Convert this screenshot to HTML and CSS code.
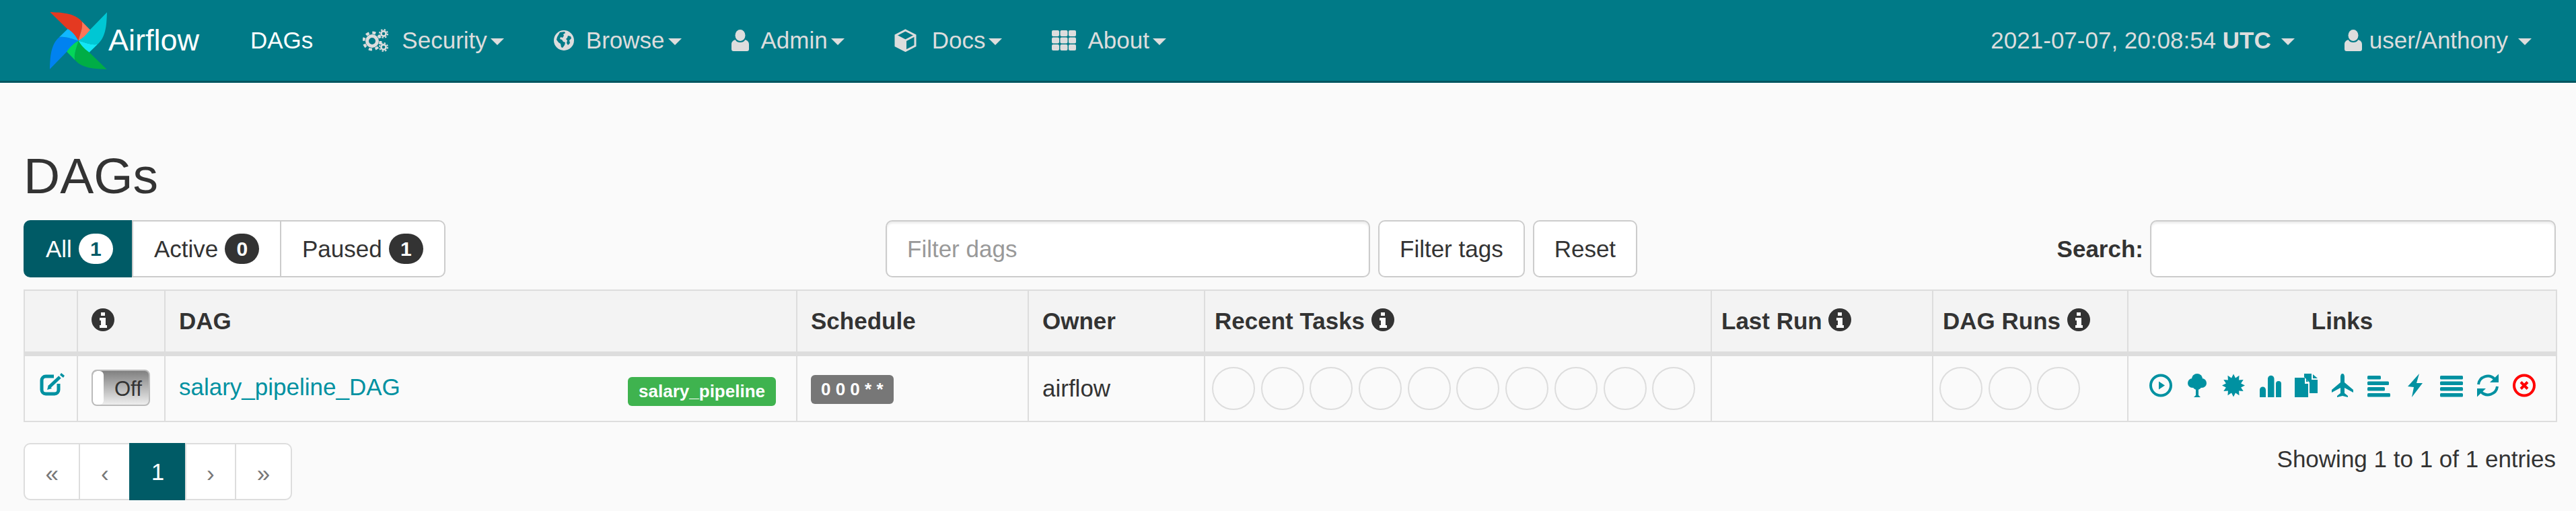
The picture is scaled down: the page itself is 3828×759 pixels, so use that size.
FILE: index.html
```html
<!DOCTYPE html>
<html lang="en">
<head>
    <meta charset="UTF-8">
    <title>DAGs - Airflow</title>
    <link rel="stylesheet" href="styles.css">
</head>
<body>
    <nav class="navbar">
        <a class="brand">
            <svg class="logo" viewBox="102 48 254 256">
                <g>
                    <path fill="#e43921" d="M102 48C150 50 210 50 245 90C250 120 235 150 229 176C215 150 195 135 178 122Z"/>
                    <path fill="#ff7557" d="M245 90L282 128C270 150 250 165 229 176C235 150 250 120 245 90Z"/>
                </g>
                <g transform="rotate(90 229 176)">
                    <path fill="#00c7d4" d="M102 48C150 50 210 50 245 90C250 120 235 150 229 176C215 150 195 135 178 122Z"/>
                    <path fill="#11e7f5" d="M245 90L282 128C270 150 250 165 229 176C235 150 250 120 245 90Z"/>
                </g>
                <g transform="rotate(180 229 176)">
                    <path fill="#00ad46" d="M102 48C150 50 210 50 245 90C250 120 235 150 229 176C215 150 195 135 178 122Z"/>
                    <path fill="#04d659" d="M245 90L282 128C270 150 250 165 229 176C235 150 250 120 245 90Z"/>
                </g>
                <g transform="rotate(270 229 176)">
                    <path fill="#0082f0" d="M102 48C150 50 210 50 245 90C250 120 235 150 229 176C215 150 195 135 178 122Z"/>
                    <path fill="#11b7ff" d="M245 90L282 128C270 150 250 165 229 176C235 150 250 120 245 90Z"/>
                </g>
            </svg>
            <span>Airflow</span>
        </a>
        <ul class="nav-items">
            <li class="nav-link nav-link-current"><span>DAGs</span></li>
            <li class="nav-link">
                <svg class="nav-icon icon-cogs" viewBox="0 0 38 34">
                    <circle cx="14" cy="18" r="7.500" fill="none" stroke="#ddd" stroke-width="5"/>
                    <circle cx="14" cy="18" r="12.500" fill="none" stroke="#ddd" stroke-width="4" stroke-dasharray="5 4.800"/>
                    <circle cx="31" cy="7" r="3.600" fill="none" stroke="#ddd" stroke-width="2.600"/>
                    <circle cx="31" cy="7" r="6" fill="none" stroke="#ddd" stroke-width="2" stroke-dasharray="2.400 2.300"/>
                    <circle cx="31" cy="27" r="3.600" fill="none" stroke="#ddd" stroke-width="2.600"/>
                    <circle cx="31" cy="27" r="6" fill="none" stroke="#ddd" stroke-width="2" stroke-dasharray="2.400 2.300"/>
                </svg>
                <span>Security</span><span class="caret"></span>
            </li>
            <li class="nav-link">
                <svg class="nav-icon icon-globe" viewBox="0 0 30 30">
                    <circle cx="15" cy="15" r="15" fill="#ddd"/>
                    <path fill="#007a87" d="M9 3l7-1 1 2-3 2 1 2-2 3-3-1-1 3 3 1 2 3 3 1-1 4-3 4-2-1-1-5-3-2-3-4 1-4z"/>
                    <path fill="#007a87" d="M21 8l4 1 1 3-3 3 1 4-3 3-2-3 1-4-2-2 2-2z"/>
                </svg>
                <span>Browse</span><span class="caret"></span>
            </li>
            <li class="nav-link">
                <svg class="nav-icon icon-user" viewBox="0 0 26 32">
                    <ellipse cx="13" cy="8.500" rx="7.500" ry="8.500" fill="#ddd"/>
                    <path fill="#ddd" d="M5.500 15c2 3 4.500 4 7.500 4s5.500-1 7.500-4c3 1 5.500 3 5.500 7v7c0 2-1 3-3 3H3c-2 0-3-1-3-3v-7c0-4 2.500-6 5.500-7z"/>
                </svg>
                <span>Admin</span><span class="caret"></span>
            </li>
            <li class="nav-link">
                <svg class="nav-icon icon-cube" viewBox="0 0 33 34">
                    <path fill="none" stroke="#ddd" stroke-width="3" d="M16.500 2L31 9.500V25L16.500 32.500L2 25V9.500ZM2 9.500L16.500 17L31 9.500M16.500 17V32.500"/>
                    <path fill="#ddd" d="M2 9.500L16.500 17V32.500L2 25Z"/>
                </svg>
                <span>Docs</span><span class="caret"></span>
            </li>
            <li class="nav-link">
                <svg class="nav-icon icon-th" viewBox="0 0 36 30">
                    <g fill="#ddd">
                        <rect width="11" height="9" rx="2"/><rect x="12.500" width="11" height="9" rx="2"/><rect x="25" width="11" height="9" rx="2"/>
                        <rect y="10.500" width="11" height="9" rx="2"/><rect x="12.500" y="10.500" width="11" height="9" rx="2"/><rect x="25" y="10.500" width="11" height="9" rx="2"/>
                        <rect y="21" width="11" height="9" rx="2"/><rect x="12.500" y="21" width="11" height="9" rx="2"/><rect x="25" y="21" width="11" height="9" rx="2"/>
                    </g>
                </svg>
                <span>About</span><span class="caret"></span>
            </li>
        </ul>
        <ul class="nav-items nav-right">
            <li class="nav-link"><span>2021-07-07, 20:08:54 <strong>UTC</strong></span><span class="caret caret-spaced"></span></li>
            <li class="nav-link">
                <svg class="nav-icon icon-user icon-user-small" viewBox="0 0 26 32">
                    <ellipse cx="13" cy="8.500" rx="7.500" ry="8.500" fill="#ddd"/>
                    <path fill="#ddd" d="M5.500 15c2 3 4.500 4 7.500 4s5.500-1 7.500-4c3 1 5.500 3 5.500 7v7c0 2-1 3-3 3H3c-2 0-3-1-3-3v-7c0-4 2.500-6 5.500-7z"/>
                </svg>
                <span>user/Anthony</span><span class="caret caret-spaced"></span>
            </li>
        </ul>
    </nav>

    <main class="container">
        <h2 class="page-title">DAGs</h2>

        <div class="toolbar">
            <div class="btn-group">
                <a class="btn btn-active"><span>All</span><span class="badge badge-light">1</span></a>
                <a class="btn btn-mid"><span>Active</span><span class="badge">0</span></a>
                <a class="btn"><span>Paused</span><span class="badge">1</span></a>
            </div>
            <form class="filters">
                <input class="form-control filter-input" type="text" placeholder="Filter dags">
                <button class="btn btn-single" type="button">Filter tags</button>
                <button class="btn btn-single" type="button">Reset</button>
            </form>
            <label class="search">
                <strong>Search:</strong>
                <input class="form-control search-input" type="search">
            </label>
        </div>

        <table class="dags-table">
            <colgroup>
                <col class="col-edit"><col class="col-toggle"><col class="col-dag"><col class="col-schedule"><col class="col-owner">
                <col class="col-tasks"><col class="col-last"><col class="col-runs"><col class="col-links">
            </colgroup>
            <thead>
                <tr>
                    <th></th>
                    <th><svg class="info" viewBox="0 0 34 34"><circle cx="17" cy="17" r="17" fill="#333"/><path fill="#fafafa" d="M14 6h6v5h-6zM12 14h9v11h2v4H12v-4h2v-7h-2z"/></svg></th>
                    <th>DAG</th>
                    <th>Schedule</th>
                    <th>Owner</th>
                    <th class="th-tight">Recent Tasks <svg class="info" viewBox="0 0 34 34"><circle cx="17" cy="17" r="17" fill="#333"/><path fill="#fafafa" d="M14 6h6v5h-6zM12 14h9v11h2v4H12v-4h2v-7h-2z"/></svg></th>
                    <th class="th-tight">Last Run <svg class="info" viewBox="0 0 34 34"><circle cx="17" cy="17" r="17" fill="#333"/><path fill="#fafafa" d="M14 6h6v5h-6zM12 14h9v11h2v4H12v-4h2v-7h-2z"/></svg></th>
                    <th class="th-tight">DAG Runs <svg class="info" viewBox="0 0 34 34"><circle cx="17" cy="17" r="17" fill="#333"/><path fill="#fafafa" d="M14 6h6v5h-6zM12 14h9v11h2v4H12v-4h2v-7h-2z"/></svg></th>
                    <th class="th-center">Links</th>
                </tr>
            </thead>
            <tbody>
                <tr>
                    <td class="td-center">
                        <svg class="edit-icon" viewBox="0 0 37 34">
                            <path fill="none" stroke="#0091a1" stroke-width="5" d="M21 5H9a6 6 0 0 0-6 6v14a6 6 0 0 0 6 6h13a6 6 0 0 0 6-6V16"/>
                            <path fill="none" stroke="#0091a1" stroke-width="5" d="M14 21L30 6"/>
                            <path fill="#0091a1" d="M13 18l-2 7 7-2zM32 0l5 4-2 3-5-4z"/>
                        </svg>
                    </td>
                    <td>
                        <div class="toggle"><span class="toggle-thumb"></span><span class="toggle-text">Off</span></div>
                    </td>
                    <td>
                        <div class="dag-cell">
                            <a class="dag-link">salary_pipeline_DAG</a>
                            <span class="label label-tag">salary_pipeline</span>
                        </div>
                    </td>
                    <td><span class="label label-schedule">0 0 0 * *</span></td>
                    <td class="owner">airflow</td>
                    <td class="circles-cell">
                        <div class="circles">
                            <span class="circle"></span><span class="circle"></span><span class="circle"></span><span class="circle"></span><span class="circle"></span>
                            <span class="circle"></span><span class="circle"></span><span class="circle"></span><span class="circle"></span><span class="circle"></span>
                        </div>
                    </td>
                    <td></td>
                    <td class="circles-cell runs-cell">
                        <div class="circles">
                            <span class="circle"></span><span class="circle"></span><span class="circle"></span>
                        </div>
                    </td>
                    <td>
                        <div class="links">
                            <svg viewBox="0 0 34 35"><circle cx="17" cy="17.500" r="15" fill="none" stroke="#0091a1" stroke-width="4"/><path fill="#0091a1" d="M14 11.500L23 17.500L14 23.500Z"/></svg>
                            <svg viewBox="0 0 34 35"><g fill="#0091a1"><circle cx="17" cy="8" r="8"/><circle cx="10" cy="14" r="7"/><circle cx="24" cy="14" r="7"/><circle cx="17" cy="17" r="7"/><path d="M15 20h4v12l3 3h-10l3-3z"/></g></svg>
                            <svg viewBox="0 0 34 35"><path fill="#0091a1" d="M17 .5L20 6.400L25.500 2.800L25.100 9.400L31.700 9L28.100 14.500L34 17.500L28.100 20.500L31.700 26L25.100 25.600L25.500 32.200L20 28.600L17 34.500L14 28.600L8.500 32.200L8.900 25.600L2.300 26L5.900 20.500L0 17.500L5.900 14.500L2.300 9L8.900 9.400L8.500 2.800L14 6.400Z"/></svg>
                            <svg viewBox="0 0 34 35"><g fill="#0091a1"><path d="M2 35V24a4.500 4.500 0 0 1 9 0V35z"/><path d="M14 35V7.500a4.700 4.700 0 0 1 9.500 0V35z"/><path d="M26 35V15a4 4 0 0 1 8 0V35z"/></g></svg>
                            <svg viewBox="0 0 34 35"><g fill="#0091a1"><path d="M14 0h11v9h9v20H22V13L14 5z"/><path d="M27 1l7 6h-7z"/><path d="M0 6h15v9h5v20H0z"/><path d="M17 7l3 5h-3z"/></g></svg>
                            <svg viewBox="0 0 34 35"><path fill="#0091a1" d="M17 0c2 0 3 2 3 5v8l13 11v4L20 21v8l5 4v2l-8-2-8 2v-2l5-4v-8L1 28v-4l13-11V5c0-3 1-5 3-5z"/></svg>
                            <svg viewBox="0 0 34 35"><g fill="#0091a1"><rect y="3" width="20" height="5.500" rx="1.500"/><rect y="11.500" width="32" height="5.500" rx="1.500"/><rect y="20" width="26" height="5.500" rx="1.500"/><rect y="29" width="34" height="5.500" rx="1.500"/></g></svg>
                            <svg viewBox="0 0 34 35"><path fill="#0091a1" d="M23 0L6 19l9 1-3 15 16-21h-9z"/></svg>
                            <svg viewBox="0 0 34 35"><g fill="#0091a1"><rect y="3" width="34" height="5.500" rx="1.500"/><rect y="11.500" width="34" height="5.500" rx="1.500"/><rect y="20" width="34" height="5.500" rx="1.500"/><rect y="29" width="34" height="5.500" rx="1.500"/></g></svg>
                            <svg viewBox="0 0 34 35"><g fill="none" stroke="#0091a1" stroke-width="4"><path d="M3 16A14 14 0 0 1 27 8"/><path d="M31 19A14 14 0 0 1 7 27"/></g><g fill="#0091a1"><path d="M33 .5V13H20z"/><path d="M1 34.500V22h13z"/></g></svg>
                            <svg viewBox="0 0 34 35"><circle cx="17" cy="17.500" r="15" fill="none" stroke="#f00" stroke-width="4"/><path fill="none" stroke="#f00" stroke-width="4" d="M12 12.500L22 22.500M22 12.500L12 22.500"/></svg>
                        </div>
                    </td>
                </tr>
            </tbody>
        </table>

        <div class="table-footer">
            <ul class="pagination">
                <li>&laquo;</li>
                <li>&lsaquo;</li>
                <li class="page-active">1</li>
                <li>&rsaquo;</li>
                <li>&raquo;</li>
            </ul>
            <div class="entries">Showing 1 to 1 of 1 entries</div>
        </div>
    </main>
</body>
</html>
```
FILE: styles.css
```css
* {
    box-sizing: border-box;
}

body {
    margin: 0;
    background-color: #fafafa;
    color: #333;
    font-family: 'Liberation Sans', Arial, sans-serif;
    font-size: 35px;
}

.navbar {
    display: flex;
    align-items: center;
    height: 123px;
    padding-left: 74px;
    padding-right: 29px;
    background-color: #007a87;
    border-bottom: 3px solid #005560;
}

.brand {
    display: flex;
    align-items: center;
    width: 261px;
    color: #fff;
    font-size: 45px;
}

.logo {
    width: 85px;
    height: 85px;
    margin-right: 2px;
}

.nav-items {
    display: flex;
    align-items: center;
    margin: 0;
    padding: 0;
    list-style: none;
}

.nav-right {
    margin-left: auto;
}

.nav-link {
    display: flex;
    align-items: center;
    padding: 0 37px;
    color: #ddd;
    white-space: nowrap;
}

.nav-link-current {
    color: #fff;
}

.nav-icon {
    margin-right: 18px;
}

.icon-cogs {
    width: 38px;
    height: 34px;
    margin-right: 20px;
}

.icon-globe {
    width: 30px;
    height: 30px;
}

.icon-user {
    width: 26px;
    height: 32px;
}

.icon-user-small {
    margin-right: 11px;
}

.icon-cube {
    width: 33px;
    height: 34px;
    margin-right: 23px;
}

.icon-th {
    width: 36px;
    height: 30px;
    margin-right: 17px;
}

.caret {
    width: 0;
    height: 0;
    margin-left: 5px;
    margin-top: 3px;
    border-top: 10px solid #ddd;
    border-left: 10px solid transparent;
    border-right: 10px solid transparent;
}

.caret-spaced {
    margin-left: 15px;
}

.container {
    padding: 97px 30px 0 35px;
}

.page-title {
    margin: 0 0 25px;
    font-size: 75px;
    font-weight: 400;
    line-height: 82px;
}

.toolbar {
    display: flex;
    align-items: center;
    margin-bottom: 18px;
}

.btn-group {
    display: flex;
    width: 627px;
}

.btn {
    display: flex;
    align-items: center;
    height: 85px;
    padding: 0 30px;
    background-color: #fff;
    border: 2px solid #ccc;
    color: #333;
    font-family: inherit;
    font-size: 35px;
    white-space: nowrap;
}

.btn-group .btn {
    padding: 0 0 0 31px;
}

.btn-group .btn + .btn {
    margin-left: -2px;
}

.btn-group .btn:first-child {
    border-radius: 10px 0 0 10px;
}

.btn-group .btn:last-child {
    flex: 1;
    border-radius: 0 10px 10px 0;
}

.btn-active {
    width: 163px;
    background-color: #005b66;
    border-color: #005b66;
    color: #fff;
}

.btn-mid {
    width: 222px;
}

.btn-single {
    margin-left: 12px;
    border-radius: 10px;
}

.badge {
    display: inline-block;
    min-width: 51px;
    margin-left: 10px;
    padding: 7px 15px;
    background-color: #333;
    border-radius: 25px;
    color: #fff;
    font-size: 30px;
    font-weight: 700;
    line-height: 31px;
    text-align: center;
}

.badge-light {
    background-color: #fff;
    color: #005b66;
}

.filters {
    display: flex;
    margin-left: 654px;
}

.form-control {
    height: 85px;
    padding: 0 30px;
    background-color: #fff;
    border: 2px solid #ccc;
    border-radius: 10px;
    box-shadow: inset 0 3px 3px rgba(0, 0, 0, .075);
    color: #555;
    font-family: inherit;
    font-size: 35px;
}

.form-control::placeholder {
    color: #999;
}

.filter-input {
    width: 720px;
}

.search {
    display: flex;
    align-items: center;
    margin-left: auto;
}

.search-input {
    width: 603px;
    margin-left: 10px;
}

.dags-table {
    width: 3763px;
    border-collapse: collapse;
    table-layout: fixed;
}

.col-edit { width: 79px; }
.col-toggle { width: 130px; }
.col-dag { width: 939px; }
.col-schedule { width: 344px; }
.col-owner { width: 262px; }
.col-tasks { width: 753px; }
.col-last { width: 329px; }
.col-runs { width: 290px; }
.col-links { width: 637px; }

.dags-table th,
.dags-table td {
    padding: 0 20px;
    border: 2px solid #ddd;
}

.dags-table th {
    height: 94px;
    border-bottom-width: 7px;
    background-color: #f3f3f3;
    font-weight: 700;
    text-align: left;
}

.dags-table th.th-tight {
    padding: 0 14px;
}

.dags-table th.th-center {
    text-align: center;
}

.dags-table td {
    height: 101px;
}

.dags-table td.td-center {
    padding: 0;
    text-align: center;
}

.info {
    width: 34px;
    height: 34px;
    vertical-align: -3px;
}

.edit-icon {
    display: block;
    width: 37px;
    height: 34px;
    margin: -12px auto 0 22px;
}

.toggle {
    display: flex;
    width: 87px;
    height: 54px;
    margin-top: -2px;
    background: linear-gradient(#808080, #eee);
    border: 2px solid #bbb;
    border-radius: 8px;
    overflow: hidden;
}

.toggle-thumb {
    width: 16px;
    background-color: #fff;
    border-radius: 6px;
}

.toggle-text {
    margin-left: 16px;
    margin-top: 9px;
    font-size: 31px;
    line-height: 36px;
}

.dag-cell {
    display: flex;
    align-items: center;
    justify-content: space-between;
}

.dag-link {
    color: #0091a1;
    margin-top: -4px;
}

.label {
    display: inline-block;
    border-radius: 6px;
    color: #fff;
    font-size: 26px;
    font-weight: 700;
    line-height: 43px;
}

.label-tag {
    margin-top: 9px;
    margin-right: 10px;
    padding: 0 16px;
    background-color: #3fb34f;
}

.label-schedule {
    margin-top: 3px;
    padding: 0 15px;
    background-color: #777;
    vertical-align: middle;
}

.circles-cell {
    padding-left: 10px !important;
}

.runs-cell {
    padding-left: 9px !important;
}

.circles {
    display: flex;
    gap: 8.7px;
}

.circle {
    width: 64px;
    height: 64px;
    border: 2px solid #ddd;
    border-radius: 50%;
}

.links {
    display: flex;
    justify-content: center;
    gap: 20px;
    margin-top: -9px;
}

.links svg {
    width: 34px;
    height: 35px;
}

.table-footer {
    display: flex;
    align-items: flex-start;
    justify-content: space-between;
    margin-top: 31px;
}

.pagination {
    display: flex;
    margin: 0;
    padding: 0;
    background-color: #fff;
    border: 2px solid #ddd;
    border-radius: 10px;
    list-style: none;
}

.pagination li {
    display: flex;
    align-items: center;
    justify-content: center;
    height: 81px;
    padding: 4px 30.5px 0;
    border-left: 2px solid #ddd;
    color: #777;
}

.pagination li:first-child {
    border-left: 0;
}

.pagination li.page-active {
    height: 85px;
    margin: -2px 0;
    padding-top: 0;
    background-color: #005b66;
    border-color: #005b66;
    color: #fff;
}

.entries {
    line-height: 48px;
}
```
